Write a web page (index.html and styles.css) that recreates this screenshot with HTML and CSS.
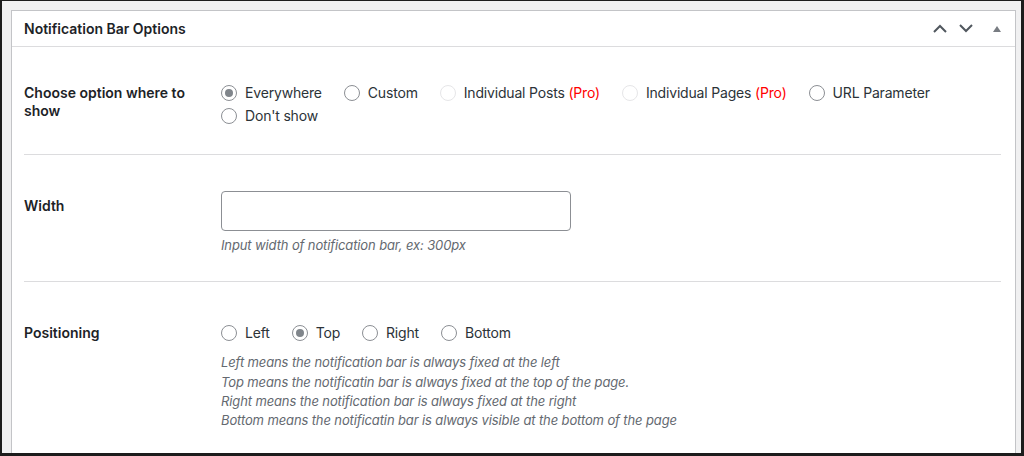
FILE: index.html
```html
<!DOCTYPE html>
<html lang="en">
<head>
<meta charset="utf-8">
<title>Notification Bar Options</title>
<link rel="stylesheet" href="styles.css">
</head>
<body>
<div class="frame">
  <div class="panel">
    <div class="panel-header">
      <h2 class="panel-title">Notification Bar Options</h2>
      <div class="panel-actions">
        <span class="act act-up"><svg width="14" height="9" viewBox="0 0 14 9"><path d="M1 8 L7 2 L13 8" fill="none" stroke="#50575e" stroke-width="2"/></svg></span>
        <span class="act act-down"><svg width="14" height="9" viewBox="0 0 14 9"><path d="M1 1 L7 7 L13 1" fill="none" stroke="#50575e" stroke-width="2"/></svg></span>
        <span class="act act-toggle"><svg width="8" height="6" viewBox="0 0 8 6"><path d="M0 6 L4 0 L8 6 Z" fill="#787c82"/></svg></span>
      </div>
    </div>
    <div class="panel-body">
      <div class="row row-first">
        <div class="label">Choose option where to show</div>
        <div class="field">
          <div class="radios">
            <label class="opt"><span class="radio checked"></span>Everywhere</label>
            <label class="opt"><span class="radio"></span>Custom</label>
            <label class="opt"><span class="radio disabled"></span>Individual Posts <span class="pro">(Pro)</span></label>
            <label class="opt"><span class="radio disabled"></span>Individual Pages <span class="pro">(Pro)</span></label>
            <label class="opt"><span class="radio"></span>URL Parameter</label>
            <label class="opt"><span class="radio"></span>Don't show</label>
          </div>
        </div>
      </div>
      <div class="row row-width">
        <div class="label">Width</div>
        <div class="field">
          <div class="text-input"></div>
          <p class="desc desc-input">Input width of notification bar, ex: 300px</p>
        </div>
      </div>
      <div class="row row-pos">
        <div class="label">Positioning</div>
        <div class="field">
          <div class="radios">
            <label class="opt"><span class="radio"></span>Left</label>
            <label class="opt"><span class="radio checked"></span>Top</label>
            <label class="opt"><span class="radio"></span>Right</label>
            <label class="opt"><span class="radio"></span>Bottom</label>
          </div>
          <div class="desc desc-list">
            <div>Left means the notification bar is always fixed at the left</div>
            <div>Top means the notificatin bar is always fixed at the top of the page.</div>
            <div>Right means the notification bar is always fixed at the right</div>
            <div>Bottom means the notificatin bar is always visible at the bottom of the page</div>
          </div>
        </div>
      </div>
    </div>
  </div>
</div>
</body>
</html>
```

FILE: styles.css
```css
* { box-sizing: border-box; }
html, body {
  margin: 0;
  padding: 0;
  height: 456px;
  overflow: hidden;
  background: #1c1c1c;
}
body {
  font-family: Inter, "Liberation Sans", sans-serif;
  font-size: 14px;
  color: #1d2327;
}
.frame {
  margin: 1px 3px 0 2px;
  height: 452px;
  overflow: hidden;
  background: #f0f0f1;
  padding: 9px 5px 0 9px;
}
.panel {
  background: #fff;
  border: 1px solid #c3c4c7;
  height: 600px;
}
.panel-header {
  height: 36px;
  border-bottom: 1px solid #dcdcde;
  display: flex;
  align-items: center;
  justify-content: space-between;
  padding: 0 14px 0 12px;
}
.panel-title {
  margin: 0;
  font-size: 14px;
  font-weight: 600;
  line-height: 18px;
  color: #1d2327;
}
.panel-actions {
  display: flex;
  align-items: center;
}
.act { display: flex; align-items: center; justify-content: center; }
.act-up { margin-right: 12px; }
.act-down { margin-right: 20px; }
.act-toggle { margin-right: 0; }
.panel-body {
  padding: 0 14px 0 12px;
}
.row {
  display: flex;
  align-items: flex-start;
  border-bottom: 1px solid #dcdcde;
}
.row:last-child { border-bottom: 0; }
.label {
  width: 197px;
  flex: none;
  font-weight: 600;
  line-height: 18px;
  padding-top: 42px;
  padding-right: 10px;
}
.field {
  flex: 1;
  min-width: 0;
}
.row-first .label { padding-top: 37px; }
.row-first .field { padding-top: 34px; padding-bottom: 27px; }
.row-width .field { padding-top: 36px; padding-bottom: 26px; }
.row-pos .field { padding-top: 39px; }
.radios {
  display: flex;
  flex-wrap: wrap;
  column-gap: 22px;
}
.opt {
  display: flex;
  align-items: center;
  height: 23px;
  color: #2c3338;
  white-space: pre;
  letter-spacing: -0.18px;
}
.radio {
  width: 16px;
  height: 16px;
  border: 1px solid #8c8f94;
  border-radius: 50%;
  margin-right: 8px;
  flex: none;
  display: flex;
  align-items: center;
  justify-content: center;
  background: #fff;
}
.radio.checked::after {
  content: "";
  width: 8px;
  height: 8px;
  border-radius: 50%;
  background: #80858b;
}
.radio.disabled { border-color: #e6e6e8; }
.pro { color: #ff0000; }
.text-input {
  width: 350px;
  height: 40px;
  border: 1px solid #8c8f94;
  border-radius: 4px;
  background: #fff;
}
.desc {
  margin: 0;
  font-size: 13px;
  font-style: italic;
  color: #646970;
  line-height: 19.3px;
  letter-spacing: -0.12px;
}
.desc-input { margin-top: 5px; }
.desc-list { margin-top: 9px; }
```
